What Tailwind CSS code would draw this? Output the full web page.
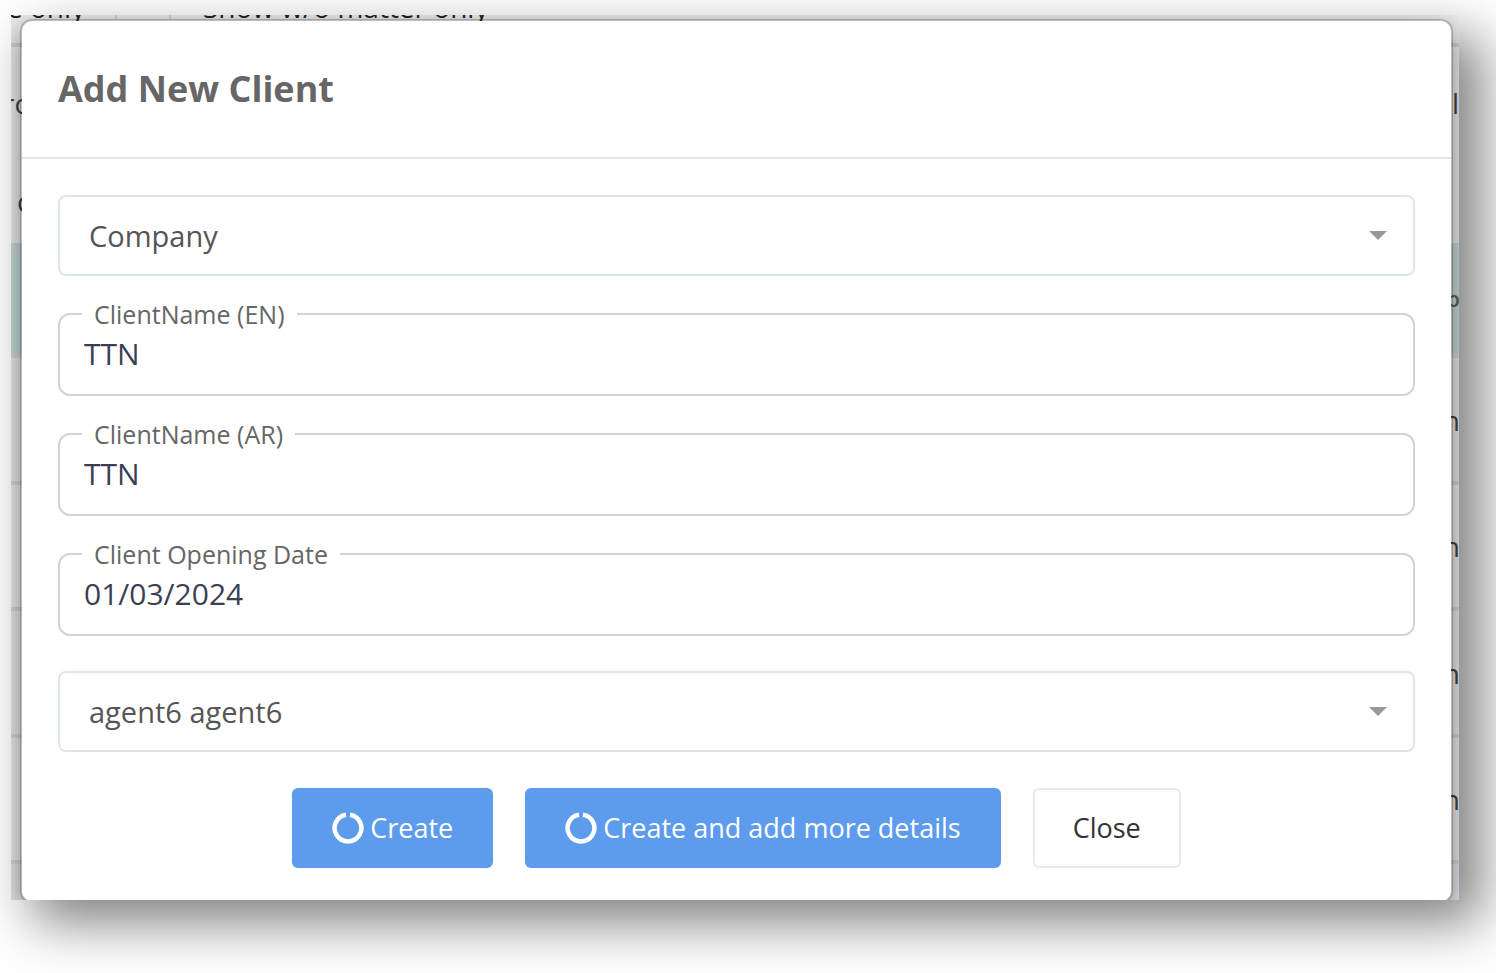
<!DOCTYPE html>
<html lang="en">
<head>
    <meta charset="UTF-8">
    <meta name="viewport" content="width=device-width, initial-scale=1.0">
    <title>Add New Client</title>
    <script src="https://cdn.jsdelivr.net/npm/@tailwindcss/browser@4"></script>
</head>
<body class="min-h-screen overflow-hidden bg-white pt-[15px] pr-[37px] pb-[73px] pl-[11px] font-['Open_Sans','Noto_Sans',sans-serif]">
    <div class="relative overflow-hidden bg-[#f1f1f1] pt-1 pr-[6px] pl-[9px] shadow-[22px_22px_50px_rgba(0,0,0,0.5)]">

        <!-- Client list behind the dialog -->
        <div class="absolute inset-0 flex flex-col text-[28px] text-[#444]" aria-hidden="true">
            <div class="flex h-8 shrink-0 border-b-4 border-[#d4d4d4] bg-[#ececec] whitespace-nowrap">
                <div class="-mt-7 -ml-1 w-[108px] leading-10 text-[#222]">e only</div>
                <div class="h-1 w-14 border-r-2 border-l-2 border-[#ccc]"></div>
                <div class="-mt-7 ml-8 leading-10 text-[#222]">Show w/o matter only</div>
            </div>
            <div class="flex h-[112px] shrink-0 items-center justify-between">
                <span class="-ml-2">ro</span><span>l</span>
            </div>
            <div class="flex h-[84px] shrink-0 items-center"><span class="ml-1.5">c</span></div>
            <div class="flex h-[115px] shrink-0 items-center justify-end border-b-4 border-[#dcdcdc] bg-[#cbdfdf] text-[22px] font-semibold text-[#666]"><span class="-mr-px">p</span></div>
            <div class="flex h-[127px] shrink-0 items-center justify-end border-b-4 border-[#dcdcdc] bg-[#eceff2]"><span class="-mr-px">n</span></div>
            <div class="flex h-[126px] shrink-0 items-center justify-end border-b-4 border-[#dcdcdc]"><span class="-mr-px">n</span></div>
            <div class="flex h-[127px] shrink-0 items-center justify-end border-b-4 border-[#dcdcdc] bg-[#eceff2]"><span class="-mr-px">n</span></div>
            <div class="flex h-[126px] shrink-0 items-center justify-end border-b-4 border-[#dcdcdc]"><span class="-mr-px">n</span></div>
            <div class="grow bg-[#e9ecef]"></div>
        </div>

        <!-- Dialog -->
        <form role="dialog" aria-labelledby="dialogTitle" class="relative -mb-[3px] rounded-xl border-2 border-black/20 bg-white bg-clip-padding shadow-[0_10px_30px_rgba(0,0,0,0.5)]">
            <div class="border-b-2 border-[#e5e5e5] px-9 pt-11 pb-11">
                <h2 id="dialogTitle" class="text-[36px] leading-12 font-bold text-[#666]">Add New Client</h2>
            </div>

            <div class="px-9 pt-9 pb-[33px]">
                <div class="relative">
                    <select aria-label="Client type" class="block h-[81px] w-full appearance-none rounded-lg border-2 border-[#dce7e9] bg-white px-[29px] text-[29px] text-[#555]">
                        <option>Company</option>
                        <option>Individual</option>
                    </select>
                    <svg class="pointer-events-none absolute top-9 right-7 h-[9px] w-[18px]" viewBox="0 0 18 9" fill="#999"><path d="M0 0h18L9 9z"/></svg>
                </div>

                <fieldset class="mt-[26px] h-[94px] rounded-xl border-2 border-[#cdd4db] px-[22px]">
                    <legend class="h-6 px-3 text-[25px] leading-6 text-[#666]"><label for="nameEn">ClientName (EN)</label></legend>
                    <input id="nameEn" type="text" value="TTN" class="mt-2.5 block h-9 w-full pl-0.5 text-[30px] leading-9 text-[#3b3f54] outline-none">
                </fieldset>

                <fieldset class="mt-[26px] h-[94px] rounded-xl border-2 border-[#cdd4db] px-[22px]">
                    <legend class="h-6 px-3 text-[25px] leading-6 text-[#666]"><label for="nameAr">ClientName (AR)</label></legend>
                    <input id="nameAr" type="text" value="TTN" class="mt-2.5 block h-9 w-full pl-0.5 text-[30px] leading-9 text-[#3b3f54] outline-none">
                </fieldset>

                <fieldset class="mt-[26px] h-[94px] rounded-xl border-2 border-[#cdd4db] px-[22px]">
                    <legend class="h-6 px-3 text-[25px] leading-6 text-[#666]"><label for="openingDate">Client Opening Date</label></legend>
                    <input id="openingDate" type="text" value="01/03/2024" class="mt-2.5 block h-9 w-full pl-0.5 text-[30px] leading-9 text-[#3b3f54] outline-none">
                </fieldset>

                <div class="relative mt-[35px]">
                    <select aria-label="Agent" class="block h-[81px] w-full appearance-none rounded-lg border-2 border-[#dce7e9] bg-white px-[29px] text-[29px] text-[#555]">
                        <option>agent6 agent6</option>
                    </select>
                    <svg class="pointer-events-none absolute top-9 right-7 h-[9px] w-[18px]" viewBox="0 0 18 9" fill="#999"><path d="M0 0h18L9 9z"/></svg>
                </div>

                <div class="mt-9 flex justify-center gap-8">
                    <button type="submit" class="flex h-20 items-center gap-1.5 rounded-md bg-[#5d9cec] px-10 text-[27px] font-medium text-white">
                        <svg class="size-8" viewBox="0 0 32 32" fill="none" stroke="#fff" stroke-width="4.5"><path d="M18 2.8a13.4 13.4 0 1 1-4 0"/></svg>
                        Create
                    </button>
                    <button type="button" class="flex h-20 items-center gap-1.5 rounded-md bg-[#5d9cec] px-10 text-[27px] font-medium text-white">
                        <svg class="size-8" viewBox="0 0 32 32" fill="none" stroke="#fff" stroke-width="4.5"><path d="M18 2.8a13.4 13.4 0 1 1-4 0"/></svg>
                        Create and add more details
                    </button>
                    <button type="button" class="h-20 rounded-md border-2 border-[#eaeaea] bg-white px-[38px] text-[27px] text-[#333]">Close</button>
                </div>
            </div>
        </form>
    </div>
</body>
</html>
